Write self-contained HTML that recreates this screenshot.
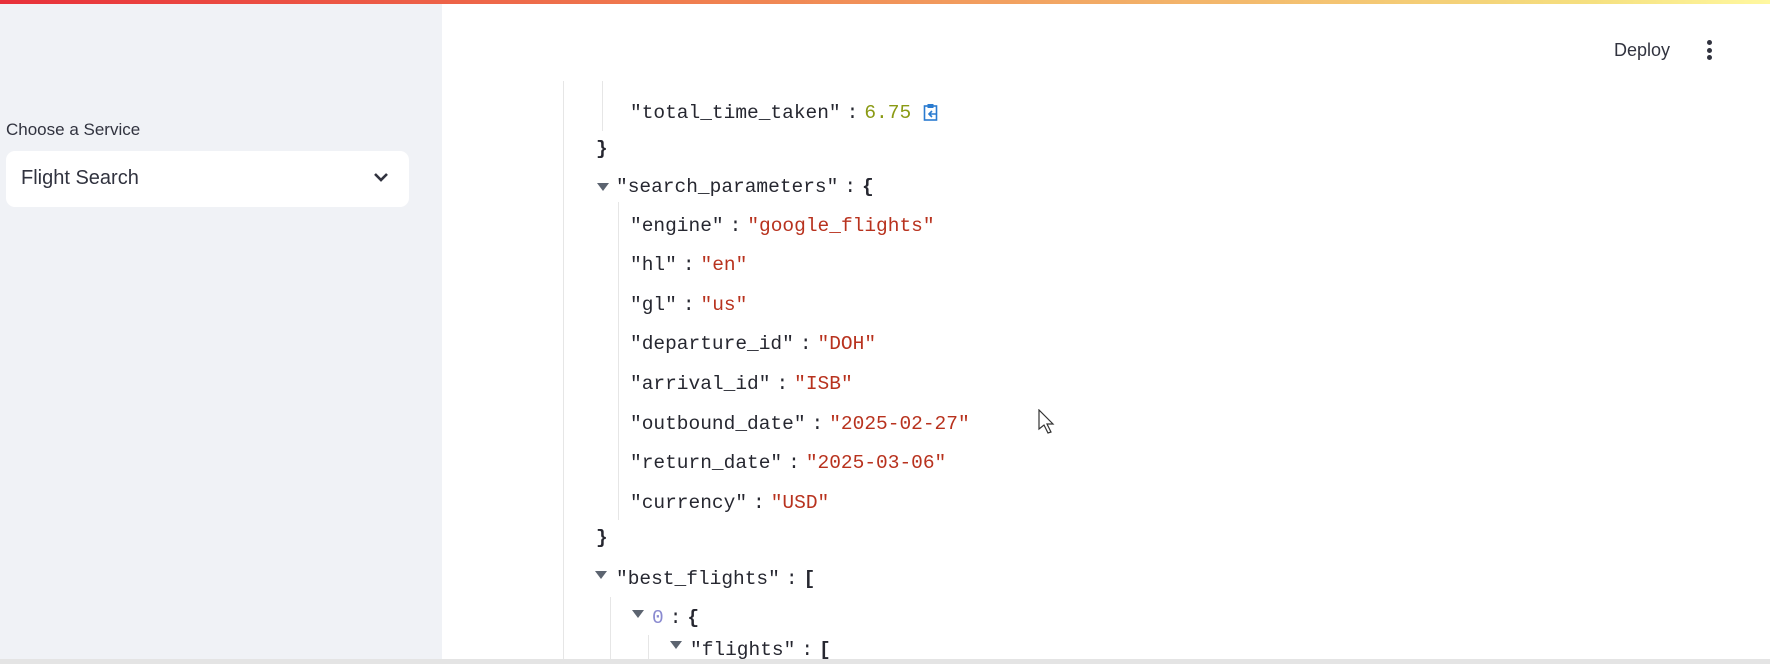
<!DOCTYPE html>
<html><head><style>
html,body{margin:0;padding:0;width:1770px;height:664px;overflow:hidden;background:#fff;font-family:"Liberation Sans",sans-serif;position:relative}
.top{position:absolute;left:0;top:0;width:1770px;height:4px;background:linear-gradient(90deg,#e8303a,#f08050 40%,#f5e080 90%,#fff8a0)}
.side{position:absolute;left:0;top:4px;width:442px;height:656px;background:#f0f2f6}
.lbl{position:absolute;left:6px;top:116px;font-size:17px;color:#31333f}
.sel{position:absolute;left:6px;top:147px;width:403px;height:56px;background:#fff;border-radius:9px}
.sel span{position:absolute;left:15px;top:16px;font-size:20px;color:#31333f}
.sel svg{position:absolute;left:367px;top:20px}
.deploy{position:absolute;left:1614px;top:40px;font-size:18px;color:#31333f}
.dots{position:absolute;left:1707px;top:40px}
.dots i{display:block;width:5px;height:5px;border-radius:50%;background:#31333f;margin-bottom:2.5px}
.vl{position:absolute;width:1px;background:#e6e6e6}
.r{position:absolute;font-family:"Liberation Mono",monospace;font-size:19.5px;color:#262730;white-space:pre;line-height:24px}
.s{color:#b8321e}.n{color:#8a9a14}.z{color:#8a8ad0}.c{margin:0 6px}
.b{font-weight:bold}
.tri{position:absolute;width:0;height:0;border-left:6px solid transparent;border-right:6px solid transparent;border-top:8px solid #5c6470}
.bot{position:absolute;left:0;top:659px;width:1770px;height:5px;background:#e4e4e4}
</style></head><body>
<div class="top"></div>
<div class="side">
<div class="lbl">Choose a Service</div>
<div class="sel"><span>Flight Search</span><svg width="16" height="12" viewBox="0 0 16 12"><path d="M2 3l6 6 6-6" fill="none" stroke="#31333f" stroke-width="2.6"/></svg></div>
</div>
<div class="deploy">Deploy</div>
<div class="dots"><i></i><i></i><i></i></div>

<div class="vl" style="left:563px;top:81px;height:583px"></div>
<div class="vl" style="left:602px;top:81px;height:50px"></div>
<div class="vl" style="left:618px;top:202px;height:318px"></div>
<div class="vl" style="left:610px;top:597px;height:67px"></div>
<div class="vl" style="left:648px;top:635px;height:29px"></div>

<div class="r" style="left:630px;top:101px">"total_time_taken"<span class="c">:</span><span class="n">6.75</span> <svg style="vertical-align:-3px" width="16" height="18" viewBox="0 0 16 18"><rect x="1.5" y="3" width="12" height="14" fill="none" stroke="#2a7bd0" stroke-width="1.6"/><rect x="4.5" y="1" width="6" height="4" fill="#2a7bd0"/><path d="M6 11h8M9 8l-3 3 3 3" stroke="#2a7bd0" stroke-width="1.6" fill="none"/></svg></div>
<div class="r b" style="left:596px;top:137px">}</div>
<div class="tri" style="left:597px;top:183px"></div>
<div class="r" style="left:616px;top:175px">"search_parameters"<span class="c">:</span><span class="b">{</span></div>
<div class="r" style="left:630px;top:214px">"engine"<span class="c">:</span><span class="s">"google_flights"</span></div>
<div class="r" style="left:630px;top:253px">"hl"<span class="c">:</span><span class="s">"en"</span></div>
<div class="r" style="left:630px;top:293px">"gl"<span class="c">:</span><span class="s">"us"</span></div>
<div class="r" style="left:630px;top:332px">"departure_id"<span class="c">:</span><span class="s">"DOH"</span></div>
<div class="r" style="left:630px;top:372px">"arrival_id"<span class="c">:</span><span class="s">"ISB"</span></div>
<div class="r" style="left:630px;top:412px">"outbound_date"<span class="c">:</span><span class="s">"2025-02-27"</span></div>
<div class="r" style="left:630px;top:451px">"return_date"<span class="c">:</span><span class="s">"2025-03-06"</span></div>
<div class="r" style="left:630px;top:491px">"currency"<span class="c">:</span><span class="s">"USD"</span></div>
<div class="r b" style="left:596px;top:526px">}</div>
<div class="tri" style="left:595px;top:571px"></div>
<div class="r" style="left:616px;top:567px">"best_flights"<span class="c">:</span><span class="b">[</span></div>
<div class="tri" style="left:632px;top:610px"></div>
<div class="r" style="left:652px;top:606px"><span class="z">0</span><span class="c">:</span><span class="b">{</span></div>
<div class="tri" style="left:670px;top:641px"></div>
<div class="r" style="left:690px;top:638px">"flights"<span class="c">:</span><span class="b">[</span></div>
<svg style="position:absolute;left:1038px;top:409px" width="18" height="26" viewBox="0 0 18 26"><path d="M1 1v19l5-4 4 8 3-1-4-8h6z" fill="#fff" stroke="#333" stroke-width="1.2"/></svg>
<div class="bot"></div>
</body></html>
